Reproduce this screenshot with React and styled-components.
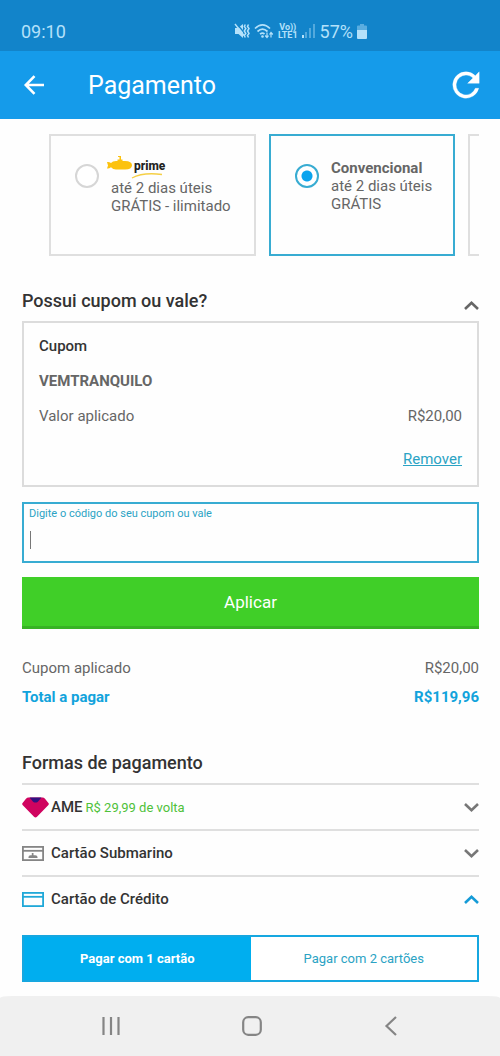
import React, { useState } from "react";
import styled, { createGlobalStyle } from "styled-components";

const GlobalStyle = createGlobalStyle`
  * { box-sizing: border-box; }
  body {
    margin: 0;
    background: #fefefe;
    font-family: Roboto, "Liberation Sans", sans-serif;
    color: #666;
  }
  button, input { font-family: inherit; }
  button { border: 0; padding: 0; background: none; cursor: pointer; }
`;

const Page = styled.div`
  display: flex;
  flex-direction: column;
  min-height: 100vh;
`;

const StatusBar = styled.div`
  display: flex;
  align-items: center;
  justify-content: space-between;
  height: 51px;
  padding: 11px 133px 0 21px;
  background: #1284ca;
  color: #b4e1fa;
  font-size: 18px;
`;

const StatusIcons = styled.div`
  display: flex;
  align-items: center;
  gap: 4px;
`;

const Volte = styled.span`
  display: flex;
  flex-direction: column;
  align-items: center;
  font-size: 9px;
  line-height: 8px;
  font-weight: 700;
`;

const AppBar = styled.header`
  display: flex;
  align-items: center;
  height: 68px;
  padding: 0 20px 0 22px;
  background: #159bea;
  color: #fff;
`;

const AppTitle = styled.h1`
  flex: 1;
  margin: 2px 0 0 42px;
  font-size: 25px;
  line-height: 32px;
  font-weight: 400;
`;

const IconButton = styled.button`
  display: flex;
  align-items: center;
  justify-content: center;
  color: inherit;
`;

const Main = styled.main`
  flex: 1;
  padding: 15px 21px 14px 22px;
`;

const Carousel = styled.div`
  display: flex;
  gap: 13px;
  padding-left: 27px;
  overflow: hidden;
`;

const ShippingCard = styled.label`
  display: flex;
  flex: none;
  align-items: flex-start;
  gap: 12px;
  width: ${(p) => (p.$wide ? 207 : 186)}px;
  height: 122px;
  padding: 23px 0 0 24px;
  border: 2px solid ${(p) => (p.$active ? "#38acd2" : "#dfdfdf")};
  font-size: 15px;
  line-height: 18px;
`;

const Radio = styled.input`
  appearance: none;
  flex: none;
  width: 24px;
  height: 24px;
  margin: 5px 0 0;
  border: 2px solid #d6d6d6;
  border-radius: 50%;
  background: #fff;
  &:checked {
    border-color: #38acd2;
    background: radial-gradient(circle, #0aa4ee 5px, #fff 6px);
  }
`;

const ShippingText = styled.span`
  display: flex;
  flex-direction: column;
  white-space: nowrap;
`;

const PrimeLogo = styled.span`
  position: relative;
  display: flex;
  height: 20px;
  margin-left: -4px;
  gap: 2px;
  color: #222;
  font-size: 12px;
  line-height: 15px;
  font-weight: 800;
  svg { flex: none; margin-top: -3px; }
`;

const Swoosh = styled.svg`
  position: absolute;
  left: 24px;
  top: 17px;
`;

const SectionHeader = styled.div`
  display: flex;
  align-items: center;
  justify-content: space-between;
  color: #666;
`;

const HeaderChevron = styled(IconButton)`
  margin-top: 9px;
`;

const SectionTitle = styled.h2`
  margin: 0;
  font-size: 18px;
  line-height: 24px;
  font-weight: 500;
  color: #333;
`;

const CouponSection = styled.section`
  margin-top: 33px;
`;

const CouponBox = styled.div`
  display: flex;
  flex-direction: column;
  gap: 15px;
  margin-top: 8px;
  padding: 13px 15px 16px;
  border: 2px solid #dcdcdc;
  font-size: 15px;
  line-height: 20px;
`;

const CouponLabel = styled.strong`
  font-weight: 500;
  color: #333;
`;

const CouponCode = styled.strong`
  font-weight: 700;
`;

const Line = styled.div`
  display: flex;
  justify-content: space-between;
  font-size: 15px;
  line-height: 20px;
  font-weight: ${(p) => (p.$total ? 700 : 400)};
  color: ${(p) => (p.$total ? "#12a3dc" : "inherit")};
`;

const RemoveLink = styled.a`
  align-self: flex-end;
  margin-top: 8px;
  color: #2ba3c4;
`;

const CodeField = styled.label`
  display: flex;
  flex-direction: column;
  height: 61px;
  margin-top: 15px;
  padding: 2px 5px;
  border: 2px solid #38acd2;
  font-size: 11px;
  line-height: 16px;
  color: #2ba3c4;
`;

const CodeEntry = styled.span`
  display: flex;
  align-items: center;
  height: 36px;
  padding-left: 1px;
`;

const Caret = styled.span`
  width: 1px;
  height: 18px;
  background: #777;
`;

const CodeInput = styled.input`
  flex: 1;
  min-width: 0;
  border: 0;
  outline: 0;
  padding: 0;
  background: transparent;
  font-size: 15px;
  color: #666;
`;

const ApplyButton = styled.button`
  display: block;
  width: 100%;
  height: 52px;
  margin-top: 14px;
  border-bottom: 3px solid #37b324;
  background: #40cf28;
  color: #fff;
  font-size: 17px;
`;

const Summary = styled.div`
  display: flex;
  flex-direction: column;
  gap: 9px;
  margin: 29px 0 44px;
`;

const Methods = styled.div`
  margin-top: 8px;
`;

const Method = styled.button`
  display: flex;
  align-items: center;
  width: 100%;
  height: 46px;
  border-top: 2px solid #dfdfdf;
  font-size: 15px;
  font-weight: 500;
  color: #333;
`;

const MethodIcon = styled.span`
  display: flex;
  width: 29px;
  flex: none;
`;

const Cashback = styled.span`
  margin-left: 3px;
  font-size: 13px;
  font-weight: 400;
  color: #4fc13a;
`;

const MethodChevron = styled.span`
  display: flex;
  margin-left: auto;
  color: ${(p) => (p.$open ? "#159bd7" : "#777")};
`;

const Toggle = styled.div`
  display: flex;
  height: 47px;
  margin-top: 14px;
  border: 2px solid #16a7e0;
`;

const ToggleButton = styled.button`
  flex: 1;
  background: ${(p) => (p.$active ? "#00aeef" : "#fff")};
  color: ${(p) => (p.$active ? "#fff" : "#2ba3c4")};
  font-size: 13px;
  font-weight: ${(p) => (p.$active ? 700 : 400)};
`;

const NavBar = styled.nav`
  display: flex;
  align-items: center;
  justify-content: space-between;
  height: 60px;
  padding: 0 99px;
  border-radius: 12px 12px 0 0 / 2px 2px 0 0;
  background: #f0f0f0;
  color: #858585;
`;

const Chevron = ({ up }) => (
  <svg width="15" height="9" viewBox="0 0 15 9" fill="none" stroke="currentColor" strokeWidth="2.6">
    <path d={up ? "M1 8 7.5 1.8 14 8" : "M1 1 7.5 7.2 14 1"} />
  </svg>
);

const CardIcon = ({ color, sub }) => (
  <svg width="22" height="15" viewBox="0 0 22 15" fill="none" stroke={color} strokeWidth="1.8">
    <rect x=".9" y=".9" width="20.2" height="13.2" />
    <path d="M1 4.8h20" strokeWidth="1.8" />
    {sub && <path d="M6.5 11q0-1.800 2-1.800h1.300V7h1.700v2.200h1.700q2.300 0 2.300 1.800v.9h-9Z" fill={color} stroke="none" />}
  </svg>
);

const AmeIcon = () => (
  <svg width="27" height="21" viewBox="0 0 27 21">
    <path d="M6.5.5h14q1.5 0 2.5 1.2l3.4 4.2q1 1.2-.2 2.3L15 19.8q-1.5 1.3-3 0L.8 8.2q-1.2-1.1-.2-2.3L4 1.7Q5 .5 6.5.5Z" fill="#d0045f" />
    <path d="M7.500 .5h12l-3.600 4.300q-.6.700-1.400.7h-2q-.8 0-1.400-.7Z" fill="#311080" />
  </svg>
);

const MuteIcon = () => (
  <svg width="16" height="16" viewBox="0 0 16 16" fill="none" stroke="currentColor">
    <path d="M1 5h3L9 1v14L4.500 11H1Z" fill="currentColor" stroke="none" />
    <path d="M2.500 .5 10.500 10" stroke="#1284ca" strokeWidth="1.400" />
    <path d="M1 1 10 12.500" strokeWidth="1.400" />
    <path d="M11.300 1.500l-1 2 1.500 2-1.500 2.500 1.500 2.500-1.500 2 1 2M14.500 1.500l-1 2 1.500 2-1.500 2.500 1.500 2.500-1.500 2 1 2" strokeWidth="1.500" />
  </svg>
);

const WifiIcon = () => (
  <svg width="20" height="16" viewBox="0 0 20 16" fill="none" stroke="currentColor" strokeWidth="1.700">
    <path d="M1 5.500Q8.500-1.800 16 5.500M3.500 8.500q5-4.600 10 0M6 11.200q2.500-2 4.500-.2" />
    <circle cx="8.500" cy="13.500" r="1.300" fill="currentColor" stroke="none" />
    <path d="M13 9.500v5m-1.800-2 1.800 2 1.500-1.800M17 14.500v-5m-1.500 2 1.500-2 1.800 2" strokeWidth="1.200" />
  </svg>
);

const SignalIcon = () => (
  <svg width="14" height="16" viewBox="0 0 14 16" fill="currentColor">
    <rect x="0" y="12" width="2" height="3" />
    <g opacity=".4">
      <rect x="3" y="9" width="2" height="6" />
      <rect x="7" y="5" width="2" height="10" />
      <rect x="11" y="1" width="2" height="14" />
    </g>
  </svg>
);

const BatteryIcon = () => (
  <svg width="10" height="15" viewBox="0 0 10 15" fill="currentColor">
    <path d="M3 0h4v1.500H3ZM1 1.500h8q1 0 1 1V7H0V2.500q0-1 1-1Z" opacity=".45" />
    <path d="M0 6h10v8q0 1-1 1H1q-1 0-1-1Z" />
  </svg>
);

const methods = [
  { id: "ame", name: "AME", cashback: "R$ 29,99 de volta", icon: <AmeIcon /> },
  { id: "sub", name: "Cartão Submarino", icon: <CardIcon color="#858585" sub /> },
  { id: "credit", name: "Cartão de Crédito", icon: <CardIcon color="#20a8d8" /> },
];

export default function App() {
  const [shipping, setShipping] = useState("convencional");
  const [open, setOpen] = useState("credit");
  const [cards, setCards] = useState(1);
  const [code, setCode] = useState("");

  return (
    <Page>
      <GlobalStyle />
      <StatusBar>
        <span>09:10</span>
        <StatusIcons>
          <MuteIcon />
          <WifiIcon />
          <Volte><span>Vo))</span><span>LTE1</span></Volte>
          <SignalIcon />
          <span>57%</span>
          <BatteryIcon />
        </StatusIcons>
      </StatusBar>
      <AppBar>
        <IconButton aria-label="Voltar">
          <svg width="24" height="24" viewBox="0 0 24 24" fill="none" stroke="currentColor" strokeWidth="2.600">
            <path d="M22 12H4M12.500 3.200 3.800 12l8.700 8.800" />
          </svg>
        </IconButton>
        <AppTitle>Pagamento</AppTitle>
        <IconButton aria-label="Atualizar">
          <svg width="28" height="28" viewBox="3.500 3.500 17 17" fill="currentColor" stroke="currentColor" strokeWidth=".2">
            <path d="M17.650 6.350A7.958 7.958 0 0 0 12 4a8 8 0 1 0 7.730 10h-2.080A6 6 0 1 1 12 6c1.660 0 3.140.690 4.220 1.780L13 11h7V4l-2.350 2.350z" />
          </svg>
        </IconButton>
      </AppBar>
      <Main>
        <Carousel>
          <ShippingCard $wide $active={shipping === "prime"}>
            <Radio type="radio" name="frete" checked={shipping === "prime"} onChange={() => setShipping("prime")} />
            <ShippingText>
              <PrimeLogo>
                <svg width="25" height="14" viewBox="0 0 25 14" fill="#fcc20f">
                  <path d="M0 6q2-.5 4 1 1.500-2 5-2h1.500V3.500h2V1H11V0h3v3.500h1.500V5H18q7 .2 7 4.300 0 4.200-7 4.200H9q-3 0-5-2.200-2 1.500-4 1.200l1-3Z" />
                </svg>
                <span>prime</span>
                <Swoosh width="32" height="6" viewBox="0 0 32 6" fill="none" stroke="#f5cf45" strokeWidth="1.300">
                  <path d="M1 5Q12-1 31 1.500" />
                </Swoosh>
              </PrimeLogo>
              <span>até 2 dias úteis</span>
              <span>GRÁTIS - ilimitado</span>
            </ShippingText>
          </ShippingCard>
          <ShippingCard $active={shipping === "convencional"}>
            <Radio type="radio" name="frete" checked={shipping === "convencional"} onChange={() => setShipping("convencional")} />
            <ShippingText>
              <strong>Convencional</strong>
              <span>até 2 dias úteis</span>
              <span>GRÁTIS</span>
            </ShippingText>
          </ShippingCard>
          <ShippingCard as="div" />
        </Carousel>

        <CouponSection>
          <SectionHeader>
            <SectionTitle>Possui cupom ou vale?</SectionTitle>
            <HeaderChevron aria-label="Recolher"><Chevron up /></HeaderChevron>
          </SectionHeader>
          <CouponBox>
            <CouponLabel>Cupom</CouponLabel>
            <CouponCode>VEMTRANQUILO</CouponCode>
            <Line><span>Valor aplicado</span><span>R$20,00</span></Line>
            <RemoveLink href="#remover">Remover</RemoveLink>
          </CouponBox>
          <CodeField>
            Digite o código do seu cupom ou vale
            <CodeEntry>
              <Caret />
              <CodeInput type="text" value={code} onChange={(e) => setCode(e.target.value)} />
            </CodeEntry>
          </CodeField>
          <ApplyButton>Aplicar</ApplyButton>
        </CouponSection>

        <Summary>
          <Line><span>Cupom aplicado</span><span>R$20,00</span></Line>
          <Line $total><span>Total a pagar</span><span>R$119,96</span></Line>
        </Summary>

        <SectionTitle>Formas de pagamento</SectionTitle>
        <Methods>
          {methods.map((m) => (
            <Method key={m.id} aria-expanded={open === m.id} onClick={() => setOpen(m.id)}>
              <MethodIcon>{m.icon}</MethodIcon>
              {m.name}
              {m.cashback && <Cashback>{m.cashback}</Cashback>}
              <MethodChevron $open={open === m.id}><Chevron up={open === m.id} /></MethodChevron>
            </Method>
          ))}
        </Methods>
        <Toggle>
          <ToggleButton $active={cards === 1} onClick={() => setCards(1)}>Pagar com 1 cartão</ToggleButton>
          <ToggleButton $active={cards === 2} onClick={() => setCards(2)}>Pagar com 2 cartões</ToggleButton>
        </Toggle>
      </Main>
      <NavBar>
        <IconButton aria-label="Recentes">
          <svg width="24" height="20" viewBox="0 0 24 20" stroke="currentColor" strokeWidth="2.200">
            <path d="M4.500 1v18M12 1v18M19.500 1v18" />
          </svg>
        </IconButton>
        <IconButton aria-label="Início">
          <svg width="20" height="20" viewBox="0 0 20 20" fill="none" stroke="currentColor" strokeWidth="2.200">
            <rect x="1.200" y="1.200" width="17.600" height="17.600" rx="5" />
          </svg>
        </IconButton>
        <IconButton aria-label="Voltar à tela anterior">
          <svg width="20" height="20" viewBox="0 0 20 20" fill="none" stroke="currentColor" strokeWidth="2.200">
            <path d="M15 1 5.500 10l9.500 9" />
          </svg>
        </IconButton>
      </NavBar>
    </Page>
  );
}
